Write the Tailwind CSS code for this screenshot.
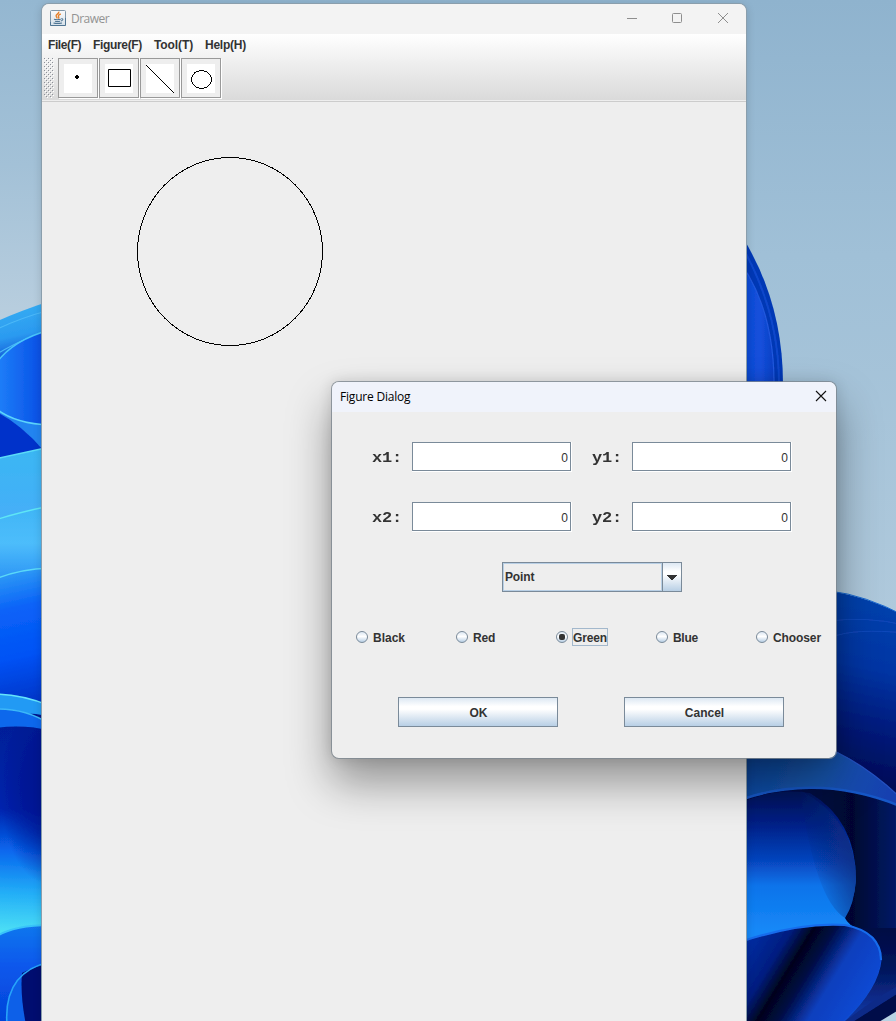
<!DOCTYPE html>
<html lang="en">
<head>
<meta charset="utf-8">
<title>Drawer</title>
<script src="https://cdn.jsdelivr.net/npm/@tailwindcss/browser@4"></script>
</head>
<body class="relative w-[896px] h-[1021px] overflow-hidden bg-[#9dbdd5] font-['Liberation_Sans',Arial,sans-serif] text-[12px] text-[#333]">

<!-- Desktop wallpaper -->
<svg class="absolute inset-0" width="896" height="1021" viewBox="0 0 896 1021">
  <defs>
    <linearGradient id="sky" x1="0" y1="0" x2="0" y2="1"><stop offset="0" stop-color="#8fb3ce"/><stop offset=".25" stop-color="#a0c0d7"/><stop offset=".6" stop-color="#afc9dc"/><stop offset="1" stop-color="#b9d0df"/></linearGradient>
    <linearGradient id="skyL" x1="0" y1="0" x2="0" y2="1"><stop offset="0" stop-color="#94b7d1"/><stop offset=".5" stop-color="#a3c1d7"/><stop offset="1" stop-color="#bacfdf"/></linearGradient>
    <linearGradient id="a1" x1="0" y1="310" x2="12" y2="365" gradientUnits="userSpaceOnUse"><stop offset="0" stop-color="#35acf2"/><stop offset=".5" stop-color="#2b9af0"/><stop offset="1" stop-color="#0a45d0"/></linearGradient>
    <linearGradient id="a2" x1="0" y1="0" x2="1" y2="0"><stop offset="0" stop-color="#1f82fa"/><stop offset="1" stop-color="#0547e2"/></linearGradient>
    <linearGradient id="a3" x1="0" y1="0" x2="0" y2="1"><stop offset="0" stop-color="#3ab7f3"/><stop offset="1" stop-color="#46aef8"/></linearGradient>
    <linearGradient id="a4" x1="0" y1="0" x2="0" y2="1"><stop offset="0" stop-color="#3fb5f6"/><stop offset=".5" stop-color="#4dbdfb"/><stop offset="1" stop-color="#2c94f5"/></linearGradient>
    <linearGradient id="a5" x1="0" y1="568" x2="30" y2="705" gradientUnits="userSpaceOnUse"><stop offset="0" stop-color="#35a4f5"/><stop offset=".3" stop-color="#0a63f8"/><stop offset=".65" stop-color="#0052f5"/><stop offset="1" stop-color="#0134c6"/></linearGradient>
    <linearGradient id="a6" x1="20" y1="725" x2="12" y2="935" gradientUnits="userSpaceOnUse"><stop offset="0" stop-color="#001f98"/><stop offset=".4" stop-color="#0223ad"/><stop offset=".6" stop-color="#0867ee"/><stop offset=".8" stop-color="#23aef7"/><stop offset="1" stop-color="#4fe3f5"/></linearGradient>
    <radialGradient id="a6b" cx="50" cy="790" r="1" gradientTransform="translate(50 790) scale(50 95) translate(-50 -790)" gradientUnits="userSpaceOnUse"><stop offset="0" stop-color="#00108a" stop-opacity=".9"/><stop offset=".5" stop-color="#00108a" stop-opacity=".6"/><stop offset="1" stop-color="#00108a" stop-opacity="0"/></radialGradient>
    <linearGradient id="a7" x1="0" y1="0" x2="0" y2="1"><stop offset="0" stop-color="#1277ee"/><stop offset=".4" stop-color="#0a58ec"/><stop offset="1" stop-color="#0343d8"/></linearGradient>
    <linearGradient id="b1" x1="0" y1="0" x2="1" y2="0"><stop offset="0" stop-color="#0b48d0"/><stop offset=".6" stop-color="#1450dc"/><stop offset="1" stop-color="#0c3fc4"/></linearGradient>
    <linearGradient id="c1" x1="880" y1="590" x2="840" y2="780" gradientUnits="userSpaceOnUse"><stop offset="0" stop-color="#0343ae"/><stop offset=".4" stop-color="#0335a4"/><stop offset=".7" stop-color="#011b7c"/><stop offset="1" stop-color="#020b55"/></linearGradient>
    <linearGradient id="c2" x1="0" y1="0" x2="1" y2=".2"><stop offset="0" stop-color="#0c459f"/><stop offset=".5" stop-color="#1557ae"/><stop offset="1" stop-color="#143fb0"/></linearGradient>
    <linearGradient id="c3" x1="810" y1="0" x2="896" y2="0" gradientUnits="userSpaceOnUse"><stop offset="0" stop-color="#000a44"/><stop offset=".5" stop-color="#000631"/><stop offset="1" stop-color="#031a66"/></linearGradient>
    <linearGradient id="c4" x1="0" y1="790" x2="0" y2="930" gradientUnits="userSpaceOnUse"><stop offset="0" stop-color="#001157"/><stop offset=".25" stop-color="#032188"/><stop offset=".5" stop-color="#0644bd"/><stop offset=".68" stop-color="#0a73ea"/><stop offset="1" stop-color="#1688f7"/></linearGradient>
    <linearGradient id="c4b" x1="812" y1="875" x2="856" y2="862" gradientUnits="userSpaceOnUse"><stop offset="0" stop-color="#05236e" stop-opacity="0"/><stop offset="1" stop-color="#0a2c80" stop-opacity=".8"/></linearGradient>
    <linearGradient id="c5" x1="746" y1="935" x2="868" y2="1010" gradientUnits="userSpaceOnUse"><stop offset="0" stop-color="#0430a8"/><stop offset=".25" stop-color="#021d80"/><stop offset=".38" stop-color="#00041c"/><stop offset=".5" stop-color="#020a42"/><stop offset=".68" stop-color="#0a3fbd"/><stop offset="1" stop-color="#0d4bd8"/></linearGradient>
    <linearGradient id="c6" x1="0" y1="930" x2="0" y2="1010" gradientUnits="userSpaceOnUse"><stop offset="0" stop-color="#000a44"/><stop offset=".5" stop-color="#03165c"/><stop offset="1" stop-color="#0d339c"/></linearGradient>
    <filter id="soft"><feGaussianBlur stdDeviation="0.7"/></filter>
  </defs>
  <rect width="896" height="1021" fill="url(#sky)"/>
  <rect width="60" height="330" fill="url(#skyL)"/>

  <!-- left petals -->
  <g filter="url(#soft)">
    <path d="M-5 322Q20 311 50 301V430H-5Z" fill="url(#a1)"/>
    <path d="M-5 330Q20 318 50 310M-5 355Q12 345 26 339" stroke="#4bb8f8" stroke-width="1.2" fill="none"/>
    <path d="M-5 365Q12 340 50 330V425Q15 425 -5 410Z" fill="url(#a2)"/>
    <path d="M-5 365Q12 340 50 330" stroke="#49c5fb" stroke-width="1.3" fill="none"/>
    <path d="M-5 408Q15 424 50 425V470H-5Z" fill="#2484f0"/>
    <path d="M-5 408Q15 424 50 425" stroke="#5bd4fc" stroke-width="1.6" fill="none"/>
    <path d="M-5 411Q22 425 43 450L-5 460Z" fill="#0432ca"/>
    <path d="M-5 459L50 447V520H-5Z" fill="url(#a3)"/>
    <path d="M-5 459L50 447" stroke="#5bdcf8" stroke-width="1.5"/>
    <path d="M-5 520Q20 512 50 506V580H-5Z" fill="url(#a4)"/>
    <path d="M-5 520Q20 512 50 506" stroke="#5ee6f5" stroke-width="1.3" fill="none"/>
    <path d="M-5 579Q20 569 50 568V712H-5Z" fill="url(#a5)"/>
    <path d="M-5 579Q20 569 50 568" stroke="#5ad9f8" stroke-width="1.4" fill="none"/>
    <path d="M-5 694Q25 695 50 706V750H-5Z" fill="#229af4"/>
    <path d="M-5 694Q25 695 50 706" stroke="#65e5fb" stroke-width="1.5" fill="none"/>
    <path d="M28 714Q38 713 50 718V724Z" fill="#01138c"/>
    <path d="M-5 709Q25 708 50 724V750H-5Z" fill="#0c68ec"/>
    <path d="M-5 709Q25 708 50 724" stroke="#3cb7f8" stroke-width="1.6" fill="none"/>
    <path d="M-5 728Q25 724 50 731V940H-5Z" fill="url(#a6)"/>
    <path d="M-5 728Q25 724 50 731V900H-5Z" fill="url(#a6b)"/>
    <path d="M-5 937Q14 925 50 925V1025H-5Z" fill="url(#a7)"/>
    <path d="M-5 937Q14 925 50 925" stroke="#39c4fa" stroke-width="2" fill="none"/>
    <path d="M50 962Q5 970 7 1025H50Z" fill="#0d60e8"/>
    <path d="M22 973Q35 966 50 964V1025H26Q20 995 22 973Z" fill="#010f70"/>
    <path d="M50 962Q3 972 7 1025" stroke="#27a4fa" stroke-width="1.6" fill="none"/>
  </g>

  <!-- upper right petal -->
  <g filter="url(#soft)">
    <path d="M740 233Q783 300 783 384V400H740Z" fill="#0638b5"/>
    <path d="M740 262Q774 310 774 384V400H740Z" fill="url(#b1)"/>
    <path d="M740 262Q774 310 774 384" stroke="#2059de" stroke-width="1.2" fill="none"/>
    <path d="M740 243Q779 310 779 384" stroke="#0947cb" stroke-width="2" fill="none"/>
  </g>

  <!-- lower right petals -->
  <g filter="url(#soft)">
    <path d="M820 590Q862 594 905 616V830H740V620Z" fill="url(#c1)"/>
    <path d="M830 591Q865 595 905 616" stroke="#1768d0" stroke-width="1" fill="none"/>
    <path d="M830 621Q865 616 905 625M832 637Q855 628 905 633" stroke="#1149bc" stroke-width="1" fill="none"/>
    <path d="M740 750H834Q870 768 905 802V830Q830 770 740 802Z" fill="url(#c2)"/>
    <path d="M836 752Q870 768 905 802" stroke="#2451c0" stroke-width="1.3" fill="none"/>
    <path d="M740 800Q820 772 905 808V1030H740Z" fill="url(#c3)"/>
    <path d="M740 800Q820 772 905 808" stroke="#1558c8" stroke-width="2.5" fill="none"/>
    <path d="M740 803Q775 787 810 793Q856 820 856 880Q854 904 845 918Q848 925 860 930L740 946Z" fill="url(#c4)"/>
    <path d="M800 790Q856 820 856 880Q854 904 845 918Q815 900 800 790Z" fill="url(#c4b)"/>
    <path d="M740 942Q800 922 845 925Q881 932 881 960Q878 990 840 1025H740Z" fill="url(#c5)"/>
    <path d="M858 928Q881 935 881 960Q878 990 840 1025L905 990V928Z" fill="url(#c6)"/>
    <path d="M740 942Q800 922 845 925Q881 932 881 960" stroke="#186cec" stroke-width="2.2" fill="none"/>
    <path d="M881 960Q878 990 840 1025" stroke="#0f4fd6" stroke-width="1.2" fill="none"/>
    <path d="M905 982Q875 998 840 1025H905Z" fill="#0b2b88"/>
    <path d="M905 989L848 1025H905Z" fill="#020c48"/>
    <path d="M905 1006L874 1025H905Z" fill="#b8d3e4"/>
  </g>
</svg>

<!-- Main window -->
<main class="absolute left-[41px] top-[3px] w-[706px] h-[1030px] rounded-t-lg border border-[#71899b]/80 bg-[#eee] overflow-hidden flex flex-col shadow-[0_2px_8px_rgba(0,0,0,0.15)]">
  <header class="h-[30px] shrink-0 bg-[#f3f3f3] flex items-center">
    <svg class="ml-2 mb-[2px] shrink-0" width="16" height="16" viewBox="0 0 16 16" fill="none">
      <defs><linearGradient id="ji" x1="0" y1="0" x2="0" y2="1"><stop stop-color="#fafafa"/><stop offset="1" stop-color="#d5e0e9"/></linearGradient></defs>
      <rect x=".5" y=".5" width="15" height="15" rx="1" fill="url(#ji)" stroke="#7f96a8"/>
      <path d="M.5 12V15.5H15.5V8" stroke="#4f7593"/>
      <path d="M8.8 1.6C9.4 4 5.2 4.4 6.2 6.4Q6.5 7.3 7.4 8.4M10.8 4C8.6 4.8 7.8 5.7 8.7 7Q9.1 7.8 8.4 8.6" stroke="#e6812c" stroke-width="1.4"/>
      <path d="M4 9.3Q7 10.2 10.8 9.3M5 11.2Q7.5 12 10 11.2M3.5 13Q7 14 12 13M11.2 8.8Q13.3 8.4 12.7 9.8Q12 10.8 10.8 11" stroke="#4f7593" stroke-width="1.1"/>
    </svg>
    <span class="ml-[5px] font-['Open_Sans',sans-serif] text-[12px] tracking-[-0.5px] text-[#929292]">Drawer</span>
    <svg class="ml-auto mr-[17px] mb-[2px]" width="102" height="12" viewBox="0 0 102 12" fill="none" stroke="#8e8e8e">
      <path d="M0 6.5H10"/><rect x="45.5" y="1.5" width="9" height="9" rx="1"/><path d="M91 1L101 11M101 1L91 11"/>
    </svg>
  </header>
  <div class="h-[66px] shrink-0 bg-linear-to-b from-white to-[#dadada]">
    <nav class="h-[22px] flex items-center pl-[6px] font-bold">
      <span class="w-[45px] tracking-[-0.4px]">File(F)</span><span class="w-[61px] tracking-[-0.33px]">Figure(F)</span><span class="w-[51px] tracking-[-0.1px]">Tool(T)</span><span class="tracking-[-0.25px]">Help(H)</span>
    </nav>
    <div class="flex gap-px pt-[2px]">
      <svg class="ml-[2px] mr-[3px]" width="10" height="40"><defs><pattern id="grip" width="4" height="4" patternUnits="userSpaceOnUse"><path d="M0 0h1v1H0zM2 2h1v1H2z" fill="#8c9098"/><path d="M1 1h1v1H1zM3 3h1v1H3z" fill="#fff"/></pattern></defs><rect width="10" height="40" fill="url(#grip)"/></svg>
      <svg width="40" height="40" class="bg-[#eee] border border-[#999] shadow-[1px_1px_0_#fff]" viewBox="1 1 38 38"><path fill="#fff" d="M6 6h28v29H6z"/><path d="M18 17h2v1h1v2h-1v1h-2v-1h-1v-2h1z" fill="#000"/></svg>
      <svg width="40" height="40" class="bg-[#eee] border border-[#999] shadow-[1px_1px_0_#fff]" viewBox="1 1 38 38"><path fill="#fff" d="M6 6h28v29H6z"/><path d="M9.5 11.5h22v17h-22z" fill="none" stroke="#000"/></svg>
      <svg width="40" height="40" class="bg-[#eee] border border-[#999] shadow-[1px_1px_0_#fff]" viewBox="1 1 38 38"><path fill="#fff" d="M6 6h28v29H6z"/><path d="M6 7l28 28" stroke="#000" shape-rendering="crispEdges"/></svg>
      <svg width="40" height="40" class="bg-[#eee] border border-[#999] shadow-[1px_1px_0_#fff]" viewBox="1 1 38 38"><path fill="#fff" d="M6 6h28v29H6z"/><ellipse cx="20.5" cy="21.5" rx="10" ry="9" fill="none" stroke="#000" shape-rendering="crispEdges"/></svg>
    </div>
  </div>
  <div class="h-[2px] shrink-0 bg-[#eee] border-b border-[#ccc]"></div>
  <svg class="shrink-0" width="704" height="919" viewBox="42 102 704 919"><ellipse cx="230" cy="251.5" rx="92.5" ry="94" fill="none" stroke="#000" shape-rendering="crispEdges"/></svg>
</main>

<!-- Dialog -->
<section class="absolute left-[331px] top-[381px] w-[506px] h-[378px] rounded-lg border border-[#7d8790]/80 bg-[#eee] bg-clip-padding overflow-hidden shadow-[0_24px_44px_rgba(0,0,0,0.38),0_0_14px_rgba(0,0,0,0.12)]">
  <header class="h-[30px] bg-[#f0f3fb] flex items-center justify-between pl-2 pr-[9px]">
    <span class="font-['Open_Sans',sans-serif] text-[12px] tracking-[-0.2px] text-black">Figure Dialog</span>
    <svg width="12" height="12" viewBox="0 0 12 12" stroke="#111" stroke-width="1.1" class="mb-[2px]"><path d="M1 1L11 11M11 1L1 11"/></svg>
  </header>
  <div class="pt-[30px] pl-10 grid grid-cols-[40px_180px_40px_160px] gap-y-[30px]">
    <span class="h-[30px] leading-[34px] origin-left scale-y-[.85] font-['Courier_New','Liberation_Mono',monospace] font-bold text-[17px] tracking-[-0.2px]">x1:</span>
    <div class="w-40 h-[30px] bg-white border-r border-b border-white"><div class="h-[29px] border border-[#7a8a99] pr-[2px] leading-[30px] text-right">0</div></div>
    <span class="h-[30px] leading-[34px] origin-left scale-y-[.85] font-['Courier_New','Liberation_Mono',monospace] font-bold text-[17px] tracking-[-0.2px]">y1:</span>
    <div class="w-40 h-[30px] bg-white border-r border-b border-white"><div class="h-[29px] border border-[#7a8a99] pr-[2px] leading-[30px] text-right">0</div></div>
    <span class="h-[30px] leading-[34px] origin-left scale-y-[.85] font-['Courier_New','Liberation_Mono',monospace] font-bold text-[17px] tracking-[-0.2px]">x2:</span>
    <div class="w-40 h-[30px] bg-white border-r border-b border-white"><div class="h-[29px] border border-[#7a8a99] pr-[2px] leading-[30px] text-right">0</div></div>
    <span class="h-[30px] leading-[34px] origin-left scale-y-[.85] font-['Courier_New','Liberation_Mono',monospace] font-bold text-[17px] tracking-[-0.2px]">y2:</span>
    <div class="w-40 h-[30px] bg-white border-r border-b border-white"><div class="h-[29px] border border-[#7a8a99] pr-[2px] leading-[30px] text-right">0</div></div>
  </div>
  <div class="mt-[30px] ml-[170px] w-[180px] h-[30px] border border-[#7a8a99] flex font-bold">
    <div class="flex-1 border border-[#b8cfe5] pl-px leading-[26px] tracking-[-0.15px]">Point</div>
    <div class="w-[19px] border-l border-[#7a8a99] bg-[linear-gradient(#dde8f3,#fff_30%,#fff_40%,#b8cfe5)] flex items-center justify-center">
      <svg width="10" height="5"><path d="M0 0h10v1H9v1H8v1H7v1H6v1H4V4H3V3H2V2H1V1H0z" fill="#333"/></svg>
    </div>
  </div>
  <div class="mt-[30px] pl-6 h-[30px] grid grid-cols-5 w-[524px] font-bold">
    <label class="flex items-center gap-[4px]"><i class="size-3 rounded-full border border-[#7a8a99] bg-[linear-gradient(#dde8f3,#fff_45%,#b8cfe5)]"></i><span class="px-px pt-[2px]">Black</span></label>
    <label class="flex items-center gap-[4px]"><i class="size-3 rounded-full border border-[#7a8a99] bg-[linear-gradient(#dde8f3,#fff_45%,#b8cfe5)]"></i><span class="px-px pt-[2px] tracking-[-0.2px]">Red</span></label>
    <label class="flex items-center gap-[4px]"><i class="size-3 rounded-full border border-[#7a8a99] bg-[linear-gradient(#dde8f3,#fff_45%,#b8cfe5)] flex items-center justify-center"><b class="size-[6px] rounded-[2px] bg-[#333]"></b></i><span class="border border-[#a3b8cc] h-[18px] leading-[18px] w-9 tracking-[-0.15px]">Green</span></label>
    <label class="flex items-center gap-[4px]"><i class="size-3 rounded-full border border-[#7a8a99] bg-[linear-gradient(#dde8f3,#fff_45%,#b8cfe5)]"></i><span class="px-px pt-[2px] tracking-[-0.3px]">Blue</span></label>
    <label class="flex items-center gap-[4px]"><i class="size-3 rounded-full border border-[#7a8a99] bg-[linear-gradient(#dde8f3,#fff_45%,#b8cfe5)]"></i><span class="px-px pt-[2px] tracking-[-0.1px]">Chooser</span></label>
  </div>
  <div class="mt-[45px] pl-[66px] flex gap-[66px] font-bold">
    <button class="w-40 h-[30px] pt-[2px] pl-px border border-[#7a8a99] bg-[linear-gradient(#dde8f3,#fff_30%,#fff_40%,#b8cfe5)]">OK</button>
    <button class="w-40 h-[30px] pt-[2px] pl-px border border-[#7a8a99] bg-[linear-gradient(#dde8f3,#fff_30%,#fff_40%,#b8cfe5)]">Cancel</button>
  </div>
</section>
</body>
</html>
